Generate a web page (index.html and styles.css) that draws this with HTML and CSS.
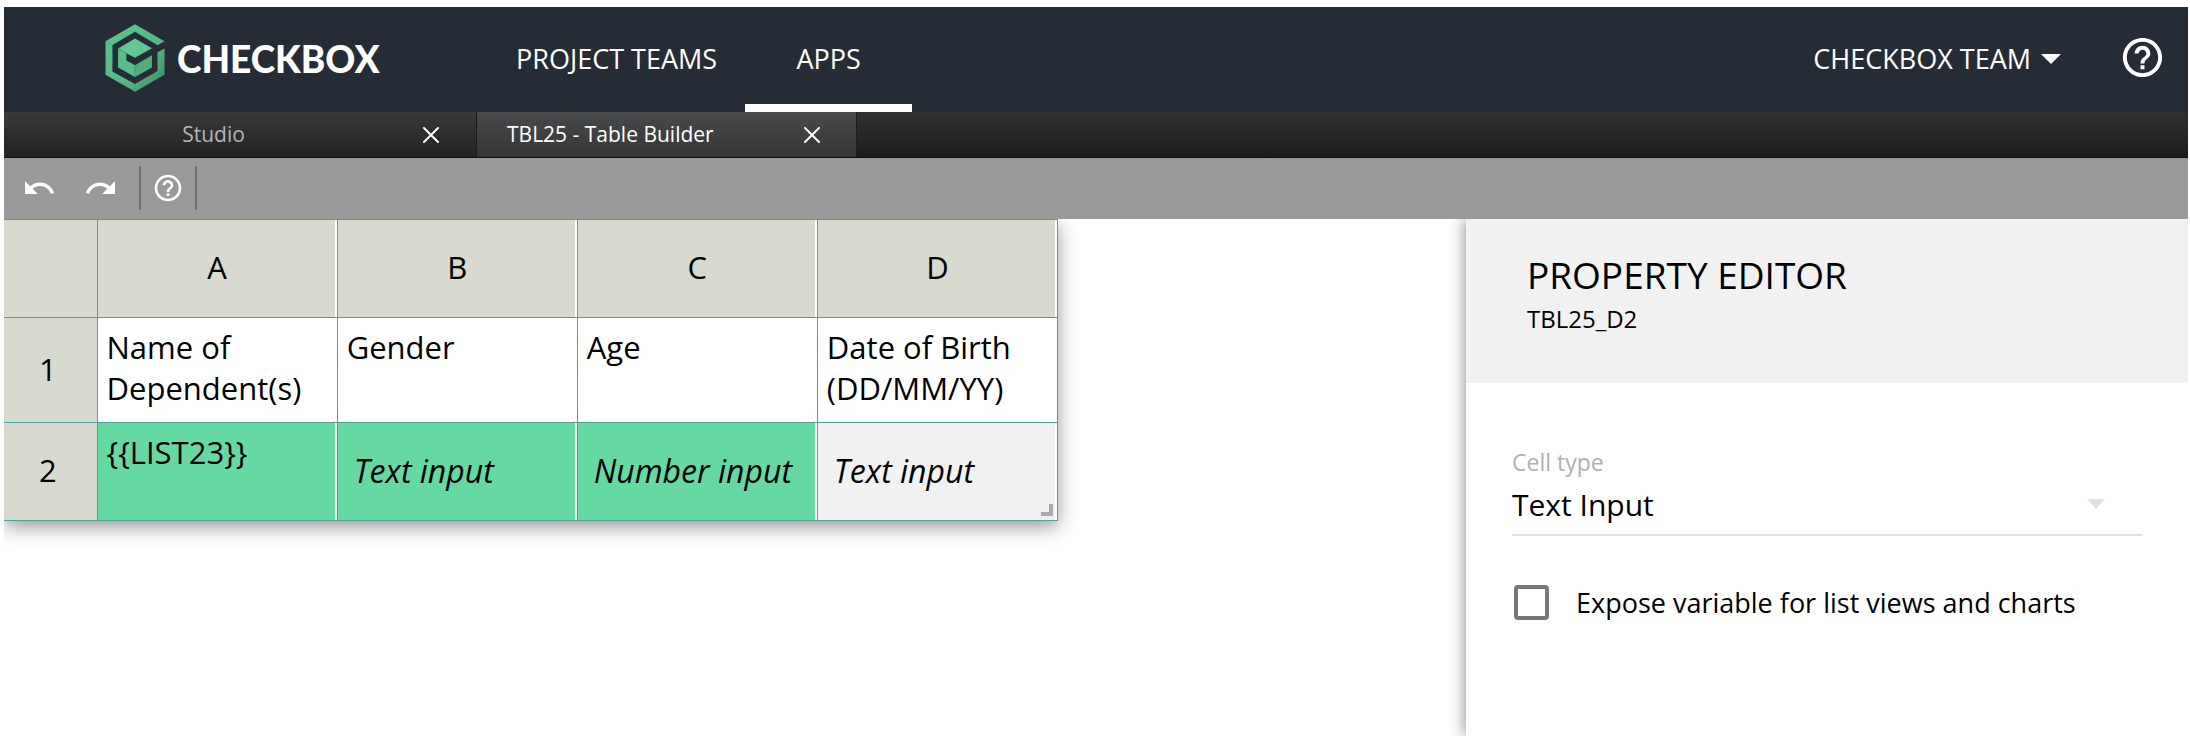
FILE: index.html
```
<!DOCTYPE html>
<html lang="en">
<head>
    <meta charset="UTF-8">
    <meta name="viewport" content="width=device-width, initial-scale=1.0">
    <title>Checkbox - Table Builder</title>
    <link rel="stylesheet" href="styles.css">
</head>
<body>
    <header class="header">
        <a class="logo" href="#">
            <svg class="logo-mark" viewBox="315 72 180 205" aria-hidden="true">
                <defs>
                    <linearGradient id="ring" x1="0" y1="0" x2="1" y2="1">
                        <stop offset="0" stop-color="#5cc592"/>
                        <stop offset="0.6" stop-color="#56b586"/>
                        <stop offset="1" stop-color="#43845f"/>
                    </linearGradient>
                </defs>
                <path fill="url(#ring)" d="M405 73L494 124L473 136L405 95L337 135V215L405 253L473 214V157L494 146V225L405 276L316 225V124Z"/>
                <path fill="#61c895" d="M405 116L456 145L405 174L379 160L354 146Z"/>
                <path fill="#59be8b" d="M354 146L379 160V182L405 196V232L354 203Z"/>
                <path fill="#50ad7d" d="M405 196L456 166V203L405 232Z"/>
                <path fill="none" stroke="#3f9269" stroke-width="2" d="M316 124L337 135M405 253V276M405 197V232M354 146L379 160"/>
            </svg>
            <span class="logo-text">CHECKBOX</span>
        </a>
        <nav class="nav">
            <a href="#">PROJECT TEAMS</a>
            <a href="#" class="active">APPS</a>
        </nav>
        <button class="team" type="button">
            CHECKBOX TEAM
            <svg width="20" height="10" viewBox="0 0 20 10" aria-hidden="true"><path fill="currentColor" d="M0 0H20L10 10Z"/></svg>
        </button>
        <button class="help" type="button" aria-label="Help">
            <svg viewBox="0 0 24 24" aria-hidden="true"><path fill="currentColor" d="M11 18h2v-2h-2v2zm1-16C6.480 2 2 6.480 2 12s4.480 10 10 10 10-4.480 10-10S17.520 2 12 2zm0 18c-4.410 0-8-3.590-8-8s3.590-8 8-8 8 3.590 8 8-3.590 8-8 8zm0-14c-2.210 0-4 1.790-4 4h2c0-1.100.9-2 2-2s2 .9 2 2c0 2-3 1.750-3 5h2c0-2.250 3-2.500 3-5 0-2.210-1.790-4-4-4z"/></svg>
        </button>
    </header>

    <div class="tabs">
        <div class="tab">
            <a href="#">Studio</a>
            <button type="button" aria-label="Close Studio">
                <svg width="16" height="16" viewBox="0 0 16 16"><path stroke="currentColor" stroke-width="2" stroke-linecap="round" d="M1 1L15 15M15 1L1 15"/></svg>
            </button>
        </div>
        <div class="tab tab-active">
            <a href="#">TBL25 - Table Builder</a>
            <button type="button" aria-label="Close Table Builder">
                <svg width="16" height="16" viewBox="0 0 16 16"><path stroke="currentColor" stroke-width="2" stroke-linecap="round" d="M1 1L15 15M15 1L1 15"/></svg>
            </button>
        </div>
    </div>

    <div class="toolbar">
        <button type="button" aria-label="Undo">
            <svg width="30" height="13" viewBox="2 7 21 9" preserveAspectRatio="none"><path fill="currentColor" d="M12.500 8c-2.650 0-5.050.99-6.900 2.600L2 7v9h9l-3.620-3.620c1.390-1.160 3.160-1.880 5.120-1.880 3.540 0 6.550 2.310 7.600 5.500l2.370-.78C21.080 11.030 17.150 8 12.500 8z"/></svg>
        </button>
        <button type="button" aria-label="Redo">
            <svg width="30" height="13" viewBox="1 7 21 9" preserveAspectRatio="none"><path fill="currentColor" d="M18.400 10.600C16.550 8.990 14.150 8 11.500 8c-4.650 0-8.580 3.030-9.960 7.220L3.900 16c1.050-3.190 4.050-5.500 7.600-5.500 1.950 0 3.730.72 5.120 1.880L13 16h9V7l-3.600 3.600z"/></svg>
        </button>
        <button class="toolbar-help" type="button" aria-label="Toolbar help">
            <svg width="32" height="32" viewBox="0 0 24 24"><path fill="currentColor" d="M11 18h2v-2h-2v2zm1-16C6.480 2 2 6.480 2 12s4.480 10 10 10 10-4.480 10-10S17.520 2 12 2zm0 18c-4.410 0-8-3.590-8-8s3.590-8 8-8 8 3.590 8 8-3.590 8-8 8zm0-14c-2.210 0-4 1.790-4 4h2c0-1.100.9-2 2-2s2 .9 2 2c0 2-3 1.750-3 5h2c0-2.250 3-2.500 3-5 0-2.210-1.790-4-4-4z"/></svg>
        </button>
    </div>

    <main class="workspace">
        <div class="canvas">
            <table class="sheet">
                <thead>
                    <tr><td class="corner"></td><th scope="col">A</th><th scope="col">B</th><th scope="col">C</th><th scope="col">D</th></tr>
                </thead>
                <tbody>
                    <tr class="row-text">
                        <th scope="row">1</th>
                        <td>Name of Dependent(s)</td>
                        <td>Gender</td>
                        <td>Age</td>
                        <td>Date of Birth (DD/MM/YY)</td>
                    </tr>
                    <tr>
                        <th scope="row">2</th>
                        <td class="green">{{LIST23}}</td>
                        <td class="green input-cell">Text input</td>
                        <td class="green input-cell">Number input</td>
                        <td class="selected input-cell">Text input<span class="resize"></span></td>
                    </tr>
                </tbody>
            </table>
        </div>
        <aside class="panel">
            <div class="panel-header">
                <h1>PROPERTY EDITOR</h1>
                <p>TBL25_D2</p>
            </div>
            <form class="panel-body">
                <label class="field-label" for="cellType">Cell type</label>
                <div class="select-box">
                    <select id="cellType">
                        <option>Text Input</option>
                        <option>Number Input</option>
                        <option>Text</option>
                    </select>
                    <svg width="18" height="10" viewBox="0 0 18 10" aria-hidden="true"><path fill="#e0e0e0" d="M0 0H18L9 10Z"/></svg>
                </div>
                <div class="check">
                    <input type="checkbox" id="expose">
                    <label for="expose">Expose variable for list views and charts</label>
                </div>
            </form>
        </aside>
    </main>
</body>
</html>
```
FILE: styles.css
```
* {
    box-sizing: border-box;
}
body {
    font-family: "Open Sans", "Noto Sans", sans-serif;
    display: flex;
    flex-direction: column;
    min-height: 100vh;
    margin: 0;
    padding: 7px 2px 0 4px;
    background-color: #ffffff;
    color: #000000;
}
a {
    color: inherit;
    text-decoration: none;
}
button {
    font: inherit;
    color: inherit;
    background: none;
    border: none;
    padding: 0;
    cursor: pointer;
}
svg {
    display: block;
}

/* Header */
.header {
    display: flex;
    align-items: stretch;
    height: 105px;
    padding-right: 22px;
    background-color: #262c36;
    color: #ffffff;
    font-size: 27px;
}
.logo {
    display: flex;
    align-items: center;
    gap: 12px;
    width: 484px;
    padding: 0 0 3px 101px;
}
.logo-mark {
    width: 60px;
    height: 68px;
}
.logo-text {
    font-family: Lato, sans-serif;
    font-size: 37px;
    font-weight: 900;
}
.nav {
    display: flex;
    margin-right: auto;
}
.nav a {
    display: flex;
    align-items: center;
    justify-content: center;
    min-width: 167px;
    padding: 6px 28px 0;
    border-bottom: 8px solid transparent;
}
.nav .active {
    border-bottom-color: #ffffff;
}
.team {
    display: flex;
    align-items: center;
    gap: 10px;
    margin-right: 58px;
    padding-bottom: 2px;
}
.help {
    display: flex;
    align-items: center;
    padding-bottom: 4px;
}
.help svg {
    width: 47px;
    height: 47px;
}

/* Open tabs */
.tabs {
    display: flex;
    height: 46px;
    background: linear-gradient(#303030, #1c1c1c);
    border-bottom: 1px solid #111111;
    font-size: 21px;
}
.tab {
    display: flex;
    align-items: center;
    width: 473px;
    padding-right: 37px;
    background: linear-gradient(#393939, #222222);
    border-right: 1px solid #1c1c1c;
    color: #b4b4b4;
}
.tab a {
    flex: 1;
    padding-bottom: 1px;
    text-align: center;
}
.tab button {
    color: #ffffff;
}
.tab-active {
    width: 380px;
    padding-right: 36px;
    background: linear-gradient(#48494b, #363636);
    color: #ffffff;
}
.tab-active a {
    padding-left: 30px;
    text-align: left;
}

/* Toolbar */
.toolbar {
    display: flex;
    align-items: center;
    gap: 30px;
    height: 61px;
    padding: 0 0 2px 21px;
    background-color: #999999;
    color: #ffffff;
}
.toolbar-help {
    height: 44px;
    margin-left: -6px;
    padding: 0 11px;
    border: solid #707070;
    border-width: 0 2px;
}

/* Table */
.workspace {
    display: flex;
    flex: 1;
}
.canvas {
    flex: 1;
    overflow: hidden;
}
.sheet {
    width: 1054px;
    table-layout: fixed;
    border-collapse: collapse;
    box-shadow: 0 6px 18px rgba(0, 0, 0, 0.4);
    font-size: 31px;
    line-height: 41px;
}
.sheet th,
.sheet td {
    width: 240px;
    height: 98px;
    padding: 9px;
    border: 1px solid #4aa398;
    background-color: #ffffff;
    box-shadow: inset -2px 0 #ffffff;
    text-align: left;
    vertical-align: top;
}
.sheet th,
.sheet .corner {
    padding-bottom: 11px;
    background-color: #d8d9cf;
    font-weight: normal;
    text-align: center;
    vertical-align: middle;
}
.sheet tbody th,
.sheet .corner {
    width: 93px;
    padding-right: 14px;
    border-left: none;
    box-shadow: none;
}
.sheet .row-text td,
.sheet .row-text th {
    height: 105px;
}
.sheet .green {
    background-color: #66d9a3;
}
.sheet .input-cell {
    position: relative;
    padding: 8px 8px 10px 16px;
    font-size: 32px;
    font-style: italic;
    vertical-align: middle;
}
.sheet .selected {
    background-color: #f1f1f1;
}
.resize {
    position: absolute;
    right: 4px;
    bottom: 4px;
    width: 12px;
    height: 12px;
    border: solid #aaaaaa;
    border-width: 0 4px 4px 0;
}

/* Property editor */
.panel {
    width: 33%;
    min-width: 722px;
    background-color: #ffffff;
    box-shadow: -2px 0 14px rgba(0, 0, 0, 0.4);
    clip-path: inset(0 0 0 -30px);
}
.panel-header {
    height: 164px;
    padding: 31px 61px;
    background-color: #f1f1f1;
}
.panel-header h1 {
    margin: 0;
    font-size: 37px;
    font-weight: normal;
    line-height: 50px;
}
.panel-header p {
    margin: 0;
    font-size: 24px;
    line-height: 38px;
}
.panel-body {
    padding: 63px 46px 0;
}
.field-label {
    display: block;
    color: #b0b0b0;
    font-size: 23px;
    line-height: 32px;
}
.select-box {
    display: grid;
    align-items: center;
    height: 58px;
    padding-bottom: 4px;
    border-bottom: 2px solid #e0e0e0;
}
.select-box select,
.select-box svg {
    grid-area: 1 / 1;
}
.select-box select {
    appearance: none;
    width: 100%;
    padding: 0;
    border: none;
    background: none;
    color: #000000;
    font-family: inherit;
    font-size: 30px;
}
.select-box svg {
    justify-self: end;
    margin-right: 37px;
    pointer-events: none;
}
.check {
    display: flex;
    align-items: center;
    gap: 27px;
    margin-top: 48px;
    font-size: 27px;
}
.check input {
    appearance: none;
    width: 35px;
    height: 35px;
    margin: 0 0 0 2px;
    border: 4px solid #777777;
    border-radius: 4px;
}
```
